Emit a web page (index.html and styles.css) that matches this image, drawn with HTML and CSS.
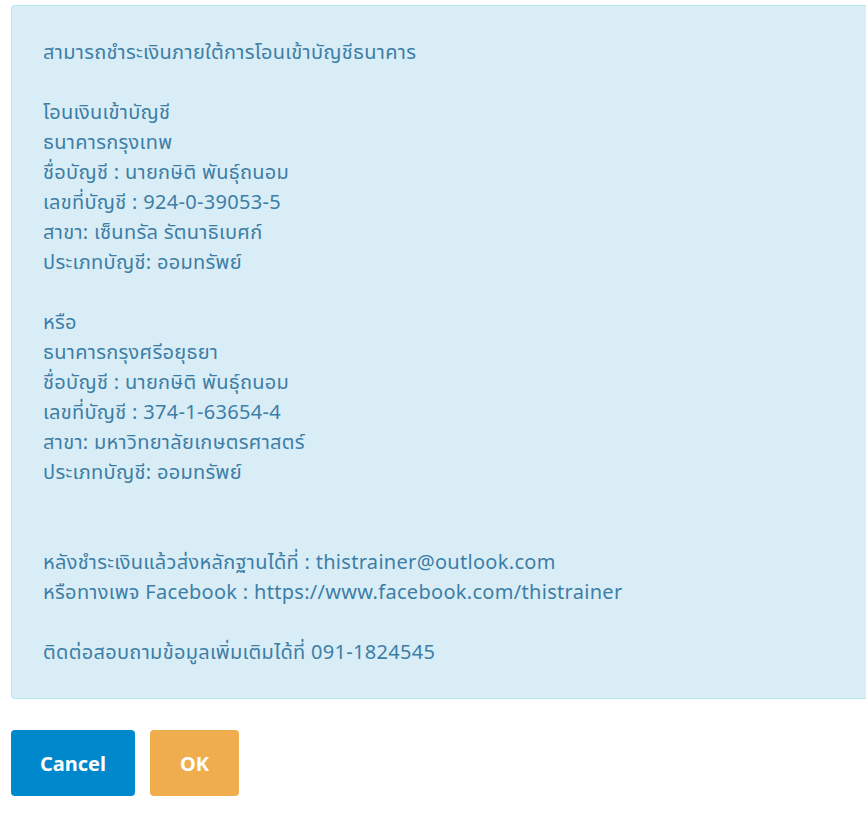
FILE: index.html
```html
<!DOCTYPE html>
<html lang="th">
<head>
    <meta charset="UTF-8">
    <meta name="viewport" content="width=device-width, initial-scale=1.0">
    <title>ชำระเงิน</title>
    <link rel="stylesheet" href="styles.css">
</head>
<body>
    <div class="payment-info">
        <p>สามารถชำระเงินภายใต้การโอนเข้าบัญชีธนาคาร</p>
        <br>
        <p>โอนเงินเข้าบัญชี</p>
        <p>ธนาคารกรุงเทพ</p>
        <p>ชื่อบัญชี : นายกษิติ พันธุ์ถนอม</p>
        <p>เลขที่บัญชี : 924-0-39053-5</p>
        <p>สาขา: เซ็นทรัล รัตนาธิเบศก์</p>
        <p>ประเภทบัญชี: ออมทรัพย์</p>
        <br>
        <p>หรือ</p>
        <p>ธนาคารกรุงศรีอยุธยา</p>
        <p>ชื่อบัญชี : นายกษิติ พันธุ์ถนอม</p>
        <p>เลขที่บัญชี : 374-1-63654-4</p>
        <p>สาขา: มหาวิทยาลัยเกษตรศาสตร์</p>
        <p>ประเภทบัญชี: ออมทรัพย์</p>
        <br>
        <br>
        <p>หลังชำระเงินแล้วส่งหลักฐานได้ที่ : thistrainer@outlook.com</p>
        <p>หรือทางเพจ Facebook : https://www.facebook.com/thistrainer</p>
        <br>
        <p>ติดต่อสอบถามข้อมูลเพิ่มเติมได้ที่ 091-1824545</p>
    </div>
    <div class="actions">
        <button type="button" class="btn btn-cancel">Cancel</button>
        <button type="button" class="btn btn-ok">OK</button>
    </div>
</body>
</html>
```
FILE: styles.css
```css
body {
    margin: 0;
    padding: 5px 0 0 11px;
    font-family: "Noto Sans Thai", "Noto Sans", sans-serif;
    background-color: #fff;
}
.payment-info {
    background-color: #d9edf7;
    border: 1px solid #bce8f1;
    border-right: none;
    border-radius: 4px 0 0 4px;
    color: #3d7ea6;
    font-size: 20px;
    letter-spacing: 0.3px;
    line-height: 30px;
    padding: 32px 31px 30px;
}
.payment-info p {
    margin: 0;
}
.payment-info br {
    display: block;
    content: "";
    height: 30px;
}
.actions {
    display: flex;
    gap: 15px;
    margin-top: 31px;
}
.btn {
    height: 66px;
    border: none;
    border-radius: 4px;
    color: #fff;
    font-family: "Noto Sans", sans-serif;
    font-size: 20px;
    font-weight: bold;
    cursor: pointer;
}
.btn-cancel {
    width: 124px;
    background-color: #0088cc;
}
.btn-ok {
    width: 89px;
    background-color: #f0ad4e;
}
```
